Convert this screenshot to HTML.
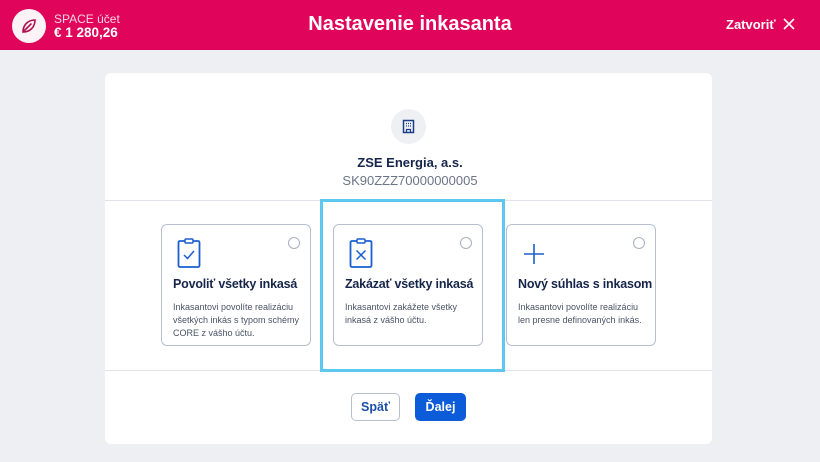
<!DOCTYPE html>
<html><head><meta charset="utf-8"><style>
*{margin:0;padding:0;box-sizing:border-box}
body{width:820px;height:462px;background:#eeeff3;font-family:"Liberation Sans",sans-serif;position:relative;overflow:hidden}
.hdr{position:absolute;left:0;top:0;width:820px;height:50px;background:#e0055a;color:#fff}
.logo{position:absolute;left:12px;top:9px;width:34px;height:34px;border-radius:50%;background:#fdf2f6}
.acc1{position:absolute;left:54px;top:12px;font-size:12px;color:#fbd3e3}
.acc2{position:absolute;left:54px;top:25px;font-size:13.5px;font-weight:bold}
.title{position:absolute;left:0;width:820px;top:13px;text-align:center;font-size:20px;font-weight:bold}
.close{position:absolute;left:726px;top:17px;font-size:13px;font-weight:bold}
.card{position:absolute;left:105px;top:73px;width:607px;height:371px;background:#fff;border-radius:6px}
.ic{position:absolute;left:391px;top:109px;width:35px;height:35px;border-radius:50%;background:#eef0f3}
.name{position:absolute;left:0;width:820px;top:155px;text-align:center;font-size:13px;font-weight:bold;color:#16254a}
.iban{position:absolute;left:0;width:820px;top:173px;text-align:center;font-size:13px;color:#6b7588}
.hl{position:absolute;left:105px;width:607px;height:1px;background:#dfe2e8}
.opt{position:absolute;top:224px;width:150px;height:122px;border:1.5px solid #b6bfd0;border-radius:6px;background:#fff}
.opt h3{position:absolute;left:11px;top:52px;font-size:12.5px;letter-spacing:-0.2px;color:#16254a;white-space:nowrap}
.opt p{position:absolute;left:11px;top:76px;font-size:9px;line-height:13px;color:#4a5366;width:128px}
.opt .r{position:absolute;right:10px;top:12px;width:12px;height:12px;border-radius:50%;border:1px solid #a9b0bc}
.opt svg{position:absolute;left:15px;top:13px}
.sel{position:absolute;left:320px;top:199px;width:185px;height:173px;border:3px solid #5ec7f0}
.btn{position:absolute;top:393px;height:28px;border-radius:5px;font-size:12.5px;font-weight:bold;text-align:center;line-height:26px}
</style></head><body>
<div class="hdr">
<div class="logo"><svg width="34" height="34" viewBox="0 0 34 34"><path d="M11 23c0-7 5-12 12-12 0 7-5 12-12 12zM11 23l8-8" fill="none" stroke="#b0104e" stroke-width="1.6" stroke-linecap="round"/></svg></div>
<div class="acc1">SPACE účet</div>
<div class="acc2">€ 1 280,26</div>
<div class="title">Nastavenie inkasanta</div>
<div class="close">Zatvoriť <svg width="12" height="12" viewBox="0 0 12 12" style="vertical-align:-1px;margin-left:4px"><path d="M1 1l10 10M11 1L1 11" stroke="#fff" stroke-width="1.6"/></svg></div>
</div>
<div class="card"></div>
<div class="ic"><svg width="35" height="35" viewBox="0 0 35 35"><rect x="12.5" y="11.5" width="10" height="12" fill="none" stroke="#1f3e8a" stroke-width="1.5"/><path d="M15 14.5h1M17 14.5h1M19 14.5h1M15 17h1M17 17h1M19 17h1M15.5 23.5v-3h4v3" stroke="#1f3e8a" stroke-width="1.2" fill="none"/></svg></div>
<div class="name">ZSE Energia, a.s.</div>
<div class="iban">SK90ZZZ70000000005</div>
<div class="hl" style="top:200px"></div>
<div class="hl" style="top:370px"></div>
<div class="opt" style="left:161px"><svg width="24" height="30" viewBox="0 0 24 30"><rect x="1.5" y="3" width="21" height="26" rx="1.5" fill="none" stroke="#1b5fd1" stroke-width="1.8"/><rect x="8" y="1" width="8" height="4" rx="1" fill="#fff" stroke="#1b5fd1" stroke-width="1.5"/><path d="M7 17l3.5 3.5L17 13" fill="none" stroke="#1b5fd1" stroke-width="1.5"/></svg><div class="r"></div><h3>Povoliť všetky inkasá</h3><p>Inkasantovi povolíte realizáciu všetkých inkás s typom schémy CORE z vášho účtu.</p></div>
<div class="opt" style="left:333px"><svg width="24" height="30" viewBox="0 0 24 30"><rect x="1.5" y="3" width="21" height="26" rx="1.5" fill="none" stroke="#1b5fd1" stroke-width="1.8"/><rect x="8" y="1" width="8" height="4" rx="1" fill="#fff" stroke="#1b5fd1" stroke-width="1.5"/><path d="M7.5 12.5l9 9M16.5 12.5l-9 9" fill="none" stroke="#1b5fd1" stroke-width="1.5"/></svg><div class="r"></div><h3>Zakázať všetky inkasá</h3><p>Inkasantovi zakážete všetky inkasá z vášho účtu.</p></div>
<div class="opt" style="left:506px"><svg width="24" height="30" viewBox="0 0 24 30"><path d="M12 6v20M2 16h20" stroke="#1b5fd1" stroke-width="1.6"/></svg><div class="r"></div><h3>Nový súhlas s inkasom</h3><p>Inkasantovi povolíte realizáciu len presne definovaných inkás.</p></div>
<div class="sel"></div>
<div class="btn" style="left:351px;width:49px;border:1.5px solid #b6bfd0;color:#1b4fa8;background:#fff">Späť</div>
<div class="btn" style="left:415px;width:51px;background:#0c5bd8;color:#fff;line-height:28px">Ďalej</div>
</body></html>
